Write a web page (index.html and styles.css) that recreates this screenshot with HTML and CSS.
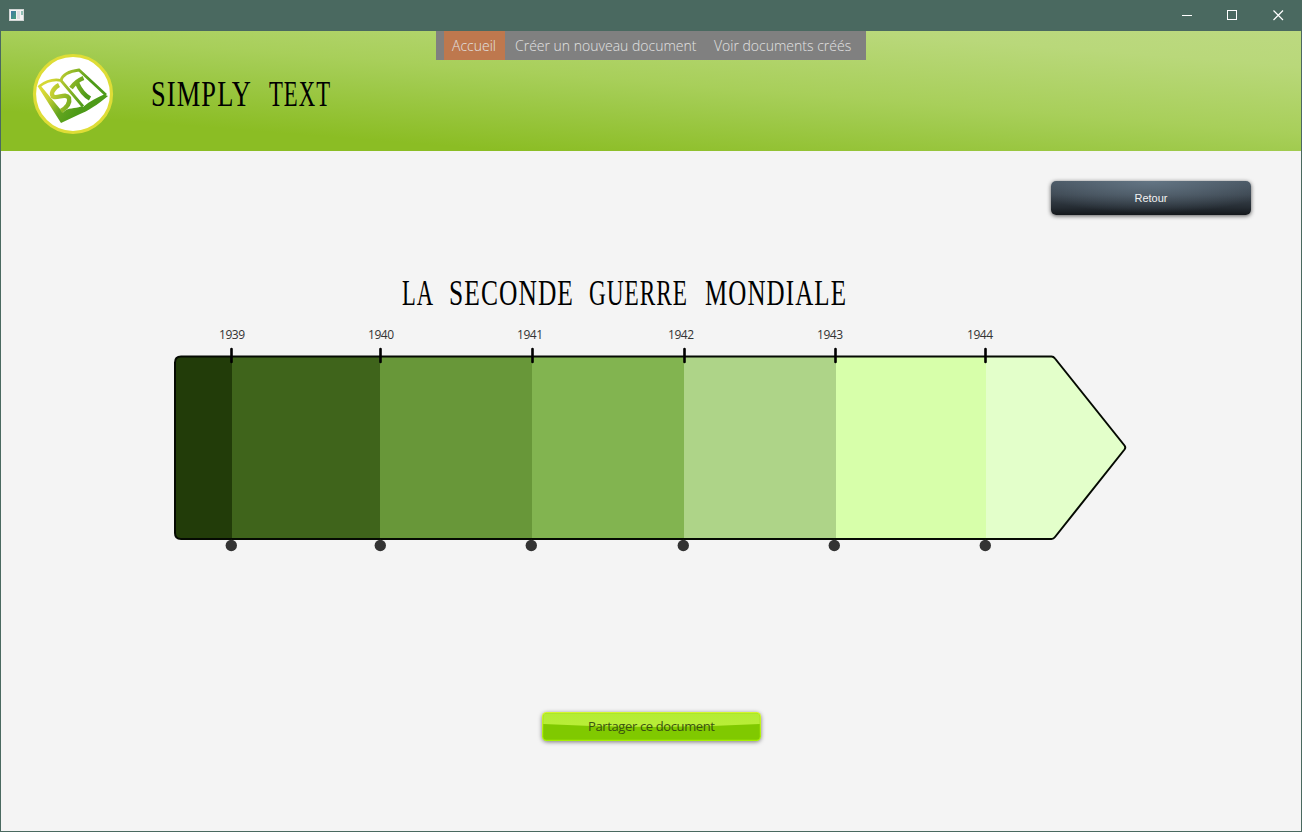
FILE: index.html
```html
<!DOCTYPE html>
<html lang="fr">
<head>
<meta charset="utf-8">
<title>Simply Text</title>
<link rel="stylesheet" href="styles.css">
</head>
<body>
<div class="window">
  <div class="titlebar">
    <svg class="app-icon" width="15" height="12" viewBox="0 0 15 12">
      <defs><linearGradient id="pic" x1="0" y1="0" x2="1" y2="1"><stop offset="0" stop-color="#3f78a8"/><stop offset="1" stop-color="#45a079"/></linearGradient></defs>
      <rect x=".5" y=".5" width="14" height="11" fill="#f3f3f3" stroke="#d2d6d5"/>
      <rect x="2" y="2" width="5" height="8" fill="url(#pic)"/>
      <rect x="8" y="2" width="3" height="8" fill="#dedfe3"/>
      <rect x="12" y="2" width="2" height="4" fill="#8fbfb4"/>
    </svg>
    <svg class="controls" width="102" height="12" viewBox="0 0 102 12" fill="none" stroke="#fff">
      <path d="M0 6.5H10"/>
      <rect x="45.5" y="1.500" width="9" height="9"/>
      <path d="M91.500 1.500l9.500 9.500M101 1.500l-9.500 9.500" stroke-width="1.200"/>
    </svg>
  </div>
  <header class="header">
    <svg class="logo" width="82" height="82" viewBox="32 53 82 82">
      <defs><linearGradient id="book" gradientUnits="userSpaceOnUse" x1="43" y1="85" x2="80" y2="108"><stop offset="0" stop-color="#dddc38"/><stop offset=".25" stop-color="#c8d033"/><stop offset=".65" stop-color="#63a51f"/><stop offset="1" stop-color="#4d9a18"/></linearGradient>
      <linearGradient id="ink" gradientUnits="userSpaceOnUse" x1="50" y1="84" x2="86" y2="96"><stop offset="0" stop-color="#d5d735"/><stop offset="1" stop-color="#4d9a18"/></linearGradient></defs>
      <circle cx="73" cy="94" r="38.500" fill="#fff" stroke="#dedd36" stroke-width="3.200"/>
      <path fill="url(#book)" d="M37.500 86L41 86L63 112.500C68 107 75 109 81 106.500L83 107C90 101 98 97 104 94.500L108 96C97 105 88 111 79 114.500L61 123Z"/>
      <g fill="none" stroke="url(#ink)" stroke-width="2.800">
        <path d="M39 86.500C45 82 52 78.500 61 80.500L83 106.500"/>
        <path d="M61 80.500C63 73 71 71 79 70L106 95"/>
        <path stroke-width="4.400" d="M59 85C53 88 49.500 95 54 97C59 98 66 93 69 98C70.500 104 66 108 61 111"/>
        <path stroke-width="4.400" d="M71 88Q76 81 83.500 78M77 83Q82 94 90 98.500"/>
      </g>
    </svg>
    <svg class="brand" width="182" height="48" viewBox="0 0 182 48">
      <text x="1" y="37" textLength="101" lengthAdjust="spacingAndGlyphs">SIMPLY</text>
      <text x="119" y="37" textLength="62" lengthAdjust="spacingAndGlyphs">TEXT</text>
    </svg>
    <nav class="menu">
      <a class="item active">Accueil</a>
      <a class="item create">Créer un nouveau document</a>
      <a class="item view">Voir documents créés</a>
    </nav>
  </header>
  <main class="main">
    <button class="back">Retour</button>
    <svg class="heading" width="448" height="48" viewBox="0 0 448 48">
      <text x="1" y="37" textLength="32" lengthAdjust="spacingAndGlyphs">LA</text>
      <text x="48" y="37" textLength="125" lengthAdjust="spacingAndGlyphs">SECONDE</text>
      <text x="188" y="37" textLength="99" lengthAdjust="spacingAndGlyphs">GUERRE</text>
      <text x="304" y="37" textLength="142" lengthAdjust="spacingAndGlyphs">MONDIALE</text>
    </svg>
    <svg class="timeline" width="960" height="230" viewBox="170 325 960 230">
      <defs><clipPath id="arrow"><path d="M181 356.500H1053L1125.500 447.500L1053 539H181Q175 539 175 533V362.500Q175 356.500 181 356.500Z"/></clipPath></defs>
      <g clip-path="url(#arrow)">
        <rect x="174" y="355" width="58" height="186" fill="#223c09"/>
        <rect x="232" y="355" width="148" height="186" fill="#3f641b"/>
        <rect x="380" y="355" width="152" height="186" fill="#689739"/>
        <rect x="532" y="355" width="152" height="186" fill="#82b450"/>
        <rect x="684" y="355" width="152" height="186" fill="#aed488"/>
        <rect x="836" y="355" width="150" height="186" fill="#d7ffaa"/>
        <rect x="986" y="355" width="142" height="186" fill="#e3ffca"/>
      </g>
      <path class="outline" d="M181 356.500H1051.500Q1053.500 356.500 1055 358.500L1124.500 445.500Q1126 447.500 1124.500 449.500L1055 537Q1053.500 539 1051.500 539H181Q175 539 175 533V362.500Q175 356.500 181 356.500Z"/>
      <path class="ticks" d="M231.500 349V362M380.500 349V362M532.500 349V362M684.500 349V362M835.500 349V362M985.500 349V362"/>
      <g class="years">
        <text x="219" y="339" textLength="26">1939</text>
        <text x="368" y="339" textLength="26">1940</text>
        <text x="517" y="339" textLength="26">1941</text>
        <text x="668" y="339" textLength="26">1942</text>
        <text x="817" y="339" textLength="26">1943</text>
        <text x="967" y="339" textLength="26">1944</text>
      </g>
      <g fill="#333">
        <circle cx="231.300" cy="545.500" r="5.700"/><circle cx="380.300" cy="545.500" r="5.700"/><circle cx="531.300" cy="545.500" r="5.700"/>
        <circle cx="683.300" cy="545.500" r="5.700"/><circle cx="834.300" cy="545.500" r="5.700"/><circle cx="985.300" cy="545.500" r="5.700"/>
      </g>
    </svg>
    <button class="share">
      <svg width="219" height="29" viewBox="0 0 219 29">
        <defs>
          <linearGradient id="gloss" x1="0" y1="0" x2="0" y2="1"><stop offset="0" stop-color="#b4ec35"/><stop offset="1" stop-color="#b9ee38"/></linearGradient>
          <linearGradient id="rim" x1="0" y1="0" x2="0" y2="1"><stop offset="0" stop-color="#d4f62c"/><stop offset="1" stop-color="#a5f000"/></linearGradient>
        </defs>
        <rect width="219" height="29" rx="4.500" fill="url(#rim)"/>
        <rect x="1.200" y="1.200" width="216.600" height="26.600" rx="3.500" fill="#80c900"/>
        <path fill="url(#gloss)" d="M1.200 12V4.700Q1.200 1.200 4.700 1.200H214.300Q217.800 1.200 217.800 4.700V12Q110 18 1.200 12Z"/>
        <text x="46" y="19" textLength="127">Partager ce document</text>
      </svg>
    </button>
  </main>
</div>
</body>
</html>
```

FILE: styles.css
```css
* { box-sizing: border-box; }
body {
  margin: 0;
  background: #f4f4f4;
  font-family: "Open Sans", "Noto Sans", sans-serif;
}
.window {
  height: 832px;
  border: 1px solid #4a6960;
  display: flex;
  flex-direction: column;
  overflow: hidden;
}
.titlebar {
  height: 30px;
  flex: none;
  background: #4a6960;
  display: flex;
  justify-content: space-between;
  align-items: flex-start;
  padding: 8px 17px 0 8px;
}
.header {
  height: 120px;
  flex: none;
  display: flex;
  align-items: flex-start;
  background: linear-gradient(4.5deg, #8bbd24 0%, #8bbd24 18%, #a1cb4f 46%, #a8cf5a 54%, #b9d87a 84%, #bcd980 100%);
}
.logo { margin: 22px 0 0 31px; }
.brand { margin: 38px 0 0 36px; }
.brand, .heading {
  font-family: "Liberation Serif", serif;
  font-size: 35px;
  letter-spacing: 1.5px;
  overflow: visible;
}
.menu {
  margin-left: 104px;
  width: 430px;
  height: 29px;
  padding-left: 8px;
  background: #808080;
  display: flex;
}
.item {
  height: 29px;
  padding: 0 0 0 8px;
  line-height: 29px;
  font-size: 14px;
  font-weight: 300;
  color: #e2e2e2;
  white-space: nowrap;
}
.active { width: 61px; background: #be784e; }
.create { width: 199px; padding-left: 10px; }
.view { padding-left: 10px; }
.main {
  flex: 1;
  display: flex;
  flex-direction: column;
  align-items: flex-start;
}
.back {
  align-self: flex-end;
  margin: 30px 50px 0 0;
  width: 200px;
  height: 34px;
  padding: 0;
  border: 0;
  border-radius: 5px;
  font: 11px "Liberation Sans", Arial, sans-serif;
  color: #f2f2f2;
  background:
    radial-gradient(ellipse 130px 32px at 50% 0, rgba(112, 132, 148, .7), rgba(112, 132, 148, 0)),
    linear-gradient(#46535f 0%, #3c4650 40%, #252c33 78%, #14181b 100%);
  box-shadow: 0 1px 4px rgba(0, 0, 0, .65);
}
.heading { margin: 53px 0 0 400px; }
.timeline { margin: 9px 0 0 169px; }
.outline { fill: none; stroke: #050a02; stroke-width: 2; }
.ticks { fill: none; stroke: #000; stroke-width: 2.6; stroke-linecap: round; }
.years { font-size: 12px; fill: #333; }
.share {
  margin: 157px 0 0 541px;
  width: 219px;
  height: 29px;
  padding: 0;
  border: 0;
  border-radius: 5px;
  background: none;
  box-shadow: 0 1px 4px rgba(0, 0, 0, .5);
  font: 13px "Open Sans", "Noto Sans", sans-serif;
}
.share svg { display: block; }
.share text { fill: #3b5210; }
```
